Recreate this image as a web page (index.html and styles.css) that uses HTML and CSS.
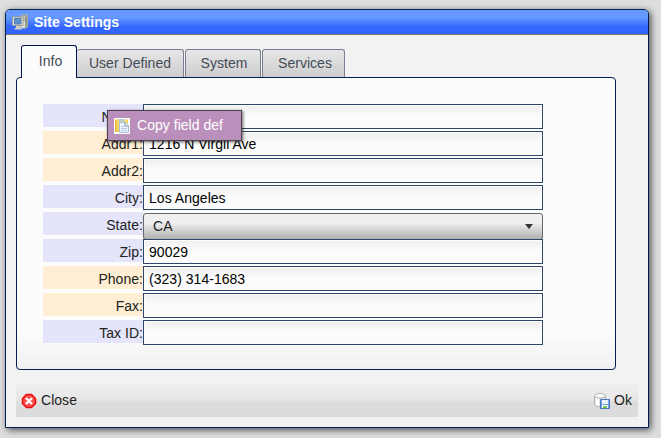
FILE: index.html
```html
<!DOCTYPE html>
<html lang="en">
<head>
<meta charset="utf-8">
<title>Site Settings</title>
<link rel="stylesheet" href="styles.css">
</head>
<body>
<main class="window">
  <header class="titlebar">
    <svg class="icon" width="16" height="16" viewBox="0 0 16 16">
      <path d="M8 2.500 10 .5h6v12l-2 2H8z" fill="#b9bbb6"/>
      <path d="M9 3.500h4v10H9z" fill="#e2e2da"/>
      <path d="M13 3.500 15.500 1v11L13 14z" fill="#92968f"/>
      <path d="M10 1.500h4M10 4.500h3M10 6.500h3" stroke="#999" fill="none"/>
      <path d="M13.500 9h1.500v1.500h-1.500z" fill="#61c849"/>
      <path d="M.5 3h10.500v8.500H.5z" fill="#e5e5dc" stroke="#999b94"/>
      <path d="M2.500 4.500h6.500v5.500H2.500z" fill="#5c91d2" stroke="#5580ab"/>
      <path d="M4 12h4v2h1.500v1.500h-7V14H4z" fill="#cfcfc8"/>
    </svg>
    <h1 class="title">Site Settings</h1>
  </header>
  <nav class="tabs">
    <a class="tab tab-active">Info</a>
    <a class="tab tab-user">User Defined</a>
    <a class="tab tab-system">System</a>
    <a class="tab tab-services">Services</a>
  </nav>
  <section class="panel">
    <div class="row"><label class="label">Name:</label><div class="input"></div></div>
    <div class="row optional"><label class="label">Addr1:</label><div class="input">1216 N Virgil Ave</div></div>
    <div class="row optional"><label class="label">Addr2:</label><div class="input"></div></div>
    <div class="row"><label class="label">City:</label><div class="input">Los Angeles</div></div>
    <div class="row"><label class="label">State:</label><div class="select"><span>CA</span><i class="arrow"></i></div></div>
    <div class="row"><label class="label">Zip:</label><div class="input">90029</div></div>
    <div class="row optional"><label class="label">Phone:</label><div class="input">(323) 314-1683</div></div>
    <div class="row optional"><label class="label">Fax:</label><div class="input"></div></div>
    <div class="row"><label class="label">Tax ID:</label><div class="input"></div></div>
  </section>
  <footer class="toolbar">
    <div class="action">
      <svg class="icon" width="16" height="16" viewBox="0 0 16 16">
        <path d="M5.500 1.500h5l4 4v5l-4 4h-5l-4-4v-5z" fill="#fa5050" stroke="#f00c0c" stroke-width="1.500"/>
        <path d="m5 5 6 6m0-6-6 6" stroke="#fff" stroke-width="2.400"/>
      </svg>
      <span class="action-text">Close</span>
    </div>
    <div class="action">
      <svg class="icon" width="16" height="16" viewBox="0 0 16 16">
        <path d="M.5 3v8.500c0 3 11 3 11 0V3z" fill="#e6e6e6" stroke="#b5b5b5"/>
        <path d="M2 5v7l3 1V5z" fill="#fff"/>
        <ellipse cx="6" cy="2.800" rx="5.500" ry="2.300" fill="#f8f8f8" stroke="#b5b5b5"/>
        <path d="M6.500 6.500h9v9h-9z" fill="#78a3e6" stroke="#4a78bc"/>
        <path d="M8 7h6v4H8z" fill="#eef5ff"/>
        <path d="M8 12h6v3H8z" fill="#fff"/>
        <path d="M9 13h4v2H9z" fill="#72cc52"/>
      </svg>
      <span class="action-text">Ok</span>
    </div>
  </footer>
</main>
<div class="menu">
  <svg class="icon" width="16" height="16" viewBox="0 0 16 16">
    <path d="M0 0h16v16H0z" fill="#fff"/>
    <path d="M1 1.500h13V14H1z" fill="#f8d262"/>
    <path d="M1 1.500h1.500V14H1z" fill="#e9b736"/>
    <path d="M4.500 1h6v2.500h-6z" fill="#b4cfe0"/>
    <path d="M5.500 4.500h6l3 3v7h-9z" fill="#eef5fd" stroke="#a5bfda"/>
    <path d="M11 4.500V8h3.500" fill="#fff" stroke="#6f8fb0"/>
    <path d="M7 8.500h3M7 10.500h6M7 12.500h6" stroke="#b5cae2"/>
  </svg>
  <span class="menu-text">Copy field def</span>
</div>
</body>
</html>
```

FILE: styles.css
```css
* { box-sizing: border-box; }
body {
  margin: 0;
  height: 438px;
  padding: 9px 0 0 5px;
  overflow: hidden;
  background: #dedede;
  font: 14px/16px "Liberation Sans", Arial, sans-serif;
  letter-spacing: 0.03px;
  color: #222;
}
.icon { display: block; flex: none; }
.window {
  width: 644px;
  height: 419px;
  border: 1px solid #00204f;
  border-radius: 5px 5px 0 0;
  background: #f2f2f2;
  box-shadow: 2px 2px 7px rgba(0, 0, 0, .65);
}
.titlebar {
  display: flex;
  align-items: center;
  gap: 6px;
  height: 25px;
  padding-left: 6px;
  border-bottom: 1px solid #777;
  border-radius: 4px 4px 0 0;
  background: linear-gradient(#6699ff 30%, #3366ff 70%);
}
.title { margin: 0; font-size: 14px; line-height: 16px; color: #fff; }
.tabs {
  position: relative;
  z-index: 1;
  display: flex;
  align-items: flex-end;
  height: 43px;
  padding-left: 15px;
}
.tab {
  height: 28px;
  margin: 0 1px 1px 0;
  padding-top: 5px;
  text-align: center;
  border: 1px solid #777f90;
  border-bottom: 0;
  border-radius: 3px 3px 0 0;
  background: linear-gradient(#e7e7e7, #cdcdcd);
  color: #434b57;
}
.tab-active {
  width: 56px;
  height: 33px;
  margin: 0;
  padding: 7px 0 0 3px;
  border-color: #001050;
  background: #fcfcfc;
}
.tab-user { width: 107px; border-left: 0; }
.tab-system { width: 76px; padding-left: 2px; }
.tab-services { width: 83px; padding-left: 3px; }
.panel {
  width: 600px;
  height: 293px;
  margin: -1px 0 0 10px;
  padding: 26px;
  border: 1px solid #00204f;
  border-radius: 4px;
  background: linear-gradient(#fcfcfc 88%, #f0f0f0);
}
.row { display: flex; height: 27px; }
.label {
  width: 100px;
  height: 23px;
  padding-top: 5px;
  background: #e4e4fa;
  text-align: right;
}
.optional .label { background: #ffeed4; }
.input, .select { width: 400px; height: 25px; border: 1px solid #304669; }
.input {
  padding: 4px 5px;
  background: linear-gradient(#f0f0f0, #fcfcfc 50%) 1px 1px / 396px 21px no-repeat #fcfcfc;
  color: #000;
}
.select {
  display: flex;
  align-items: center;
  justify-content: space-between;
  height: 27px;
  margin-top: 1px;
  padding: 0 9px 1px;
  border-color: #666;
  border-radius: 3px;
  background: linear-gradient(#efefef 35%, #b0b0b0);
}
.arrow {
  border: 4px solid transparent;
  border-top: 5px solid #333;
  border-bottom: 0;
}
.toolbar {
  display: flex;
  justify-content: space-between;
  width: 622px;
  height: 33px;
  margin: 14px 0 0 10px;
  padding: 0 6px 0 5px;
  background: linear-gradient(#eee, #e9e9e9 40%, #dcdcdc 60%);
}
.action { display: flex; align-items: center; gap: 4px; }
.action-text, .menu-text { padding-bottom: 1px; }
.menu {
  position: absolute;
  top: 110px;
  left: 107px;
  display: flex;
  align-items: center;
  gap: 7px;
  width: 135px;
  height: 31px;
  padding-left: 6px;
  border: 1px solid #4b454b;
  background: #bb8fbb;
  box-shadow: 1px 1px 3px rgba(0, 0, 0, .6);
  color: #fff;
}
```
